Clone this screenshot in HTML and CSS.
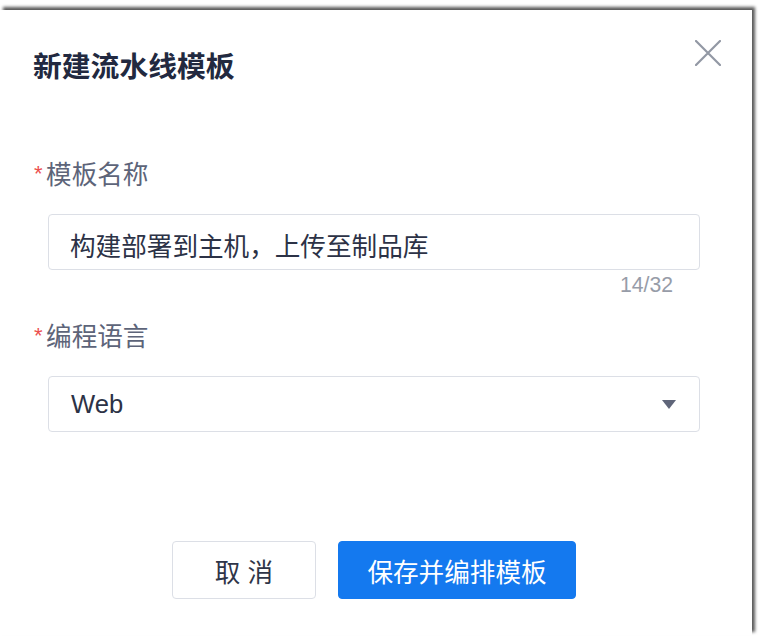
FILE: index.html
```html
<!DOCTYPE html>
<html lang="zh-CN">
<head>
<meta charset="utf-8">
<title>新建流水线模板</title>
<link rel="stylesheet" href="styles.css">
</head>
<body>
<div class="dialog">
  <div class="dialog-header">
    <h2 class="dialog-title">新建流水线模板</h2>
    <button class="close-btn" aria-label="关闭">
      <svg width="26" height="26" viewBox="0 0 26 26"><path d="M1 1L25 25M25 1L1 25" stroke="#9298a4" stroke-width="2.2" fill="none" stroke-linecap="round"/></svg>
    </button>
  </div>
  <div class="dialog-body">
    <div class="form-item">
      <label class="form-label"><span class="req">*</span>模板名称</label>
      <div class="form-control">
        <div class="input">构建部署到主机，上传至制品库</div>
        <div class="counter">14/32</div>
      </div>
    </div>
    <div class="form-item form-item-2">
      <label class="form-label"><span class="req">*</span>编程语言</label>
      <div class="form-control">
        <div class="select"><span class="select-value">Web</span><span class="caret"></span></div>
      </div>
    </div>
  </div>
  <div class="dialog-footer">
    <button class="btn btn-default">取 消</button>
    <button class="btn btn-primary">保存并编排模板</button>
  </div>
</div>
</body>
</html>
```

FILE: styles.css
```css
html, body {
  margin: 0;
  padding: 0;
  background: #ffffff;
}
body {
  width: 762px;
  height: 640px;
  overflow: hidden;
  font-family: "Liberation Sans", "Noto Sans CJK SC", sans-serif;
}
.dialog {
  margin-top: 10px;
  width: 752px;
  height: 625px;
  background: #ffffff;
  box-shadow: 3px -3px 3px rgba(0, 0, 0, 0.65);
}
.dialog-header {
  display: flex;
  justify-content: space-between;
  align-items: flex-start;
  padding: 30px 31px 0 33px;
}
.dialog-title {
  margin: 7px 0 0 0;
  font-size: 28.8px;
  line-height: 40px;
  font-weight: 700;
  color: #222940;
}
.close-btn {
  width: 26px;
  height: 26px;
  padding: 0;
  border: 0;
  background: transparent;
  display: block;
}
.close-btn svg {
  display: block;
}
.dialog-body {
  padding: 70px 52px 0 34px;
}
.form-label {
  display: block;
  font-size: 25.6px;
  line-height: 36px;
  color: #5d6479;
}
.req {
  font-size: 22px;
  line-height: 1;
  color: #ec4f4f;
  margin-right: 3.5px;
  vertical-align: 3px;
}
.form-control {
  margin-left: 14px;
  margin-top: 21px;
}
.input {
  box-sizing: border-box;
  height: 56px;
  border: 1px solid #dcdfe6;
  border-radius: 4px;
  padding: 5px 21px 0 21px;
  display: flex;
  align-items: center;
  font-size: 25.6px;
  color: #2c3246;
}
.counter {
  height: 30px;
  line-height: 30px;
  text-align: right;
  padding-right: 27px;
  font-size: 21.2px;
  color: #979ca8;
}
.form-item-2 {
  margin-top: 19px;
}
.select {
  box-sizing: border-box;
  height: 56px;
  border: 1px solid #dcdfe6;
  border-radius: 4px;
  padding: 0 23px 0 22px;
  display: flex;
  align-items: center;
  justify-content: space-between;
  font-size: 25.6px;
  color: #2c3246;
}
.caret {
  width: 0;
  height: 0;
  border-left: 7.5px solid transparent;
  border-right: 7.5px solid transparent;
  border-top: 9px solid #5f6579;
}
.dialog-footer {
  display: flex;
  justify-content: center;
  gap: 22px;
  margin-top: 109px;
  padding-right: 4px;
}
.btn {
  box-sizing: border-box;
  height: 58px;
  border-radius: 4px;
  font-family: "Liberation Sans", "Noto Sans CJK SC", sans-serif;
  font-size: 25.6px;
  padding: 0;
  margin: 0;
}
.btn-default {
  width: 144px;
  background: #ffffff;
  border: 1px solid #dcdfe6;
  color: #2f3548;
}
.btn-primary {
  width: 238px;
  background: #1479ef;
  border: 1px solid #1479ef;
  color: #ffffff;
}
```
